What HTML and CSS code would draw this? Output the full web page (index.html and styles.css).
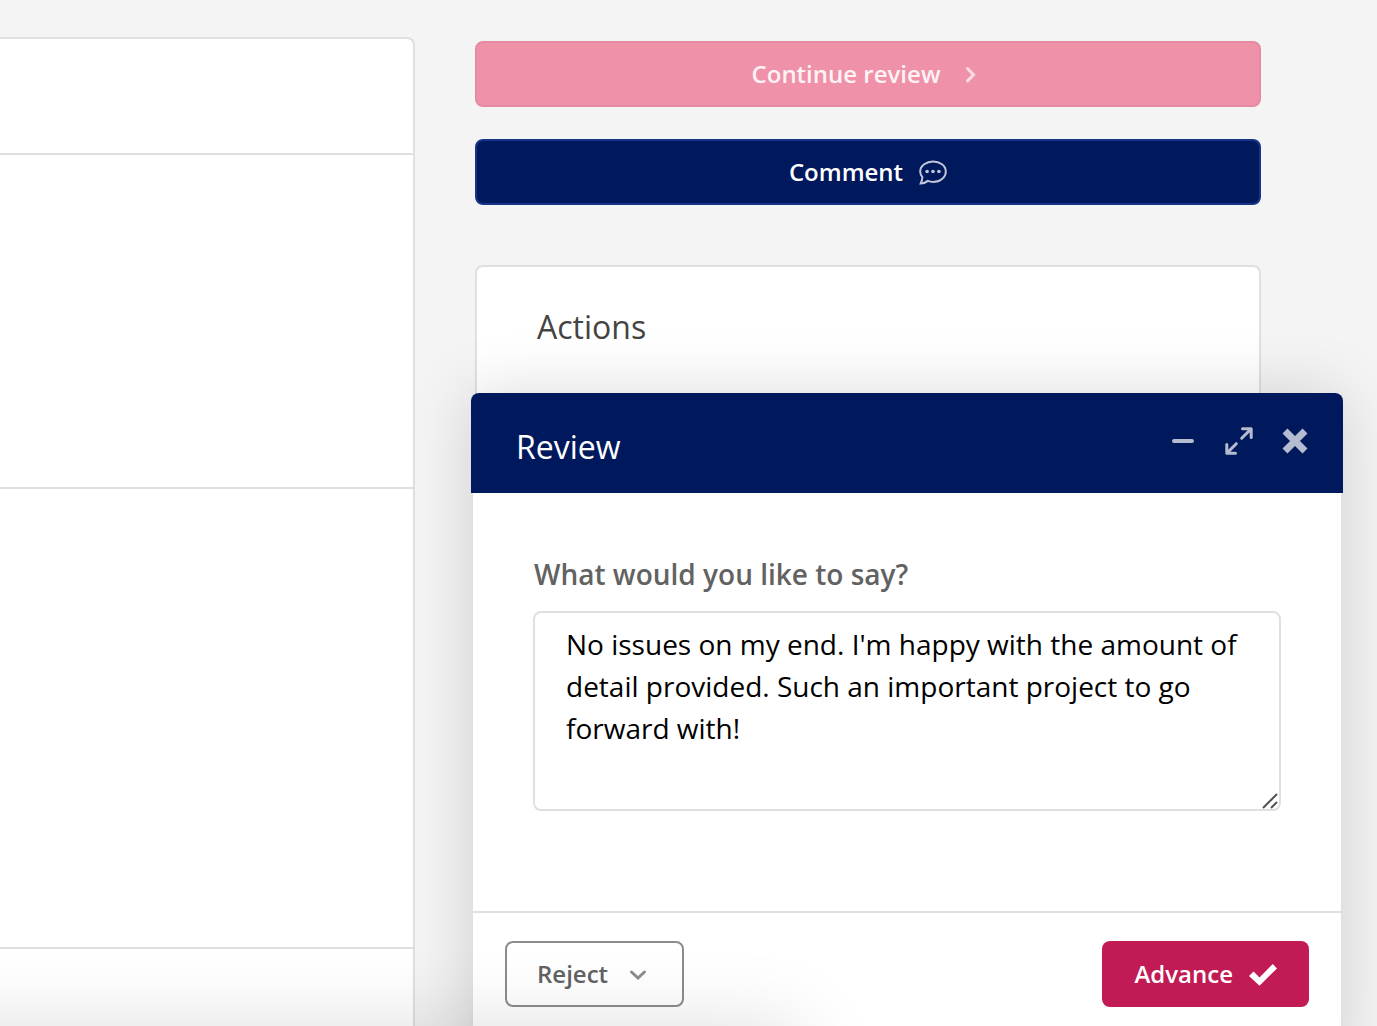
FILE: index.html
```html
<!DOCTYPE html>
<html lang="en">
<head>
<meta charset="utf-8">
<title>Review</title>
<link rel="stylesheet" href="styles.css">
</head>
<body>
<div class="page">
  <main class="record">
    <section class="record-row row-short"></section>
    <section class="record-row row-medium"></section>
    <section class="record-row row-tall"></section>
    <section class="record-row row-last"></section>
  </main>
  <aside class="sidebar">
    <button class="button button-continue" type="button" disabled>
      <span>Continue review</span>
      <svg class="icon-chevron" width="28" height="28" viewBox="0 0 28 28" aria-hidden="true"><path d="M11.500 8.500l6 6.200-6 6.200"/></svg>
    </button>
    <button class="button button-comment" type="button">
      <span>Comment</span>
      <svg class="icon-comment" width="28" height="28" viewBox="0 0 28 28" aria-hidden="true"><path d="M14.200 3.500C20.800 3.500 26.800 7.500 26.800 13.500S21 23.900 14.200 23.900c-2 0-3.800-.300-5.300-1-2.100 1.700-4.600 2.800-7.300 2.700 1.100-2.200 1.700-4.300 1.800-6.400C1.900 17.500 1.200 15.700 1.200 13.500 1.200 7.500 7.500 3.500 14.200 3.500z"/><circle cx="8.100" cy="13.500" r="1.800"/><circle cx="14" cy="13.500" r="1.800"/><circle cx="19.900" cy="13.500" r="1.800"/></svg>
    </button>
    <section class="actions">
      <h2 class="heading">Actions</h2>
    </section>
  </aside>
</div>

<form class="dialog" role="dialog" aria-labelledby="dialog-title">
  <header class="dialog-header">
    <h2 class="heading" id="dialog-title">Review</h2>
    <div class="dialog-tools">
      <button class="tool" type="button" aria-label="Minimise"><svg width="28" height="28" viewBox="0 0 28 28"><path class="line-thick" d="M5 14h18"/></svg></button>
      <button class="tool" type="button" aria-label="Expand"><svg width="28" height="28" viewBox="0 0 28 28"><path class="line-thin" d="M16.700 11.300L25 3M17.500 1.800h8.700v8.700M11.300 16.700L3 25M1.800 17.500v8.700h8.700"/></svg></button>
      <button class="tool" type="button" aria-label="Close"><svg width="28" height="28" viewBox="0 0 28 28"><path class="cross" d="M4 4l20 20M24 4L4 24"/></svg></button>
    </div>
  </header>
  <div class="dialog-body">
    <label class="label" for="message">What would you like to say?</label>
    <div class="field">
      <textarea class="textarea" id="message">No issues on my end. I'm happy with the amount of detail provided. Such an important project to go forward with!</textarea>
      <svg class="grip" width="16" height="16" viewBox="0 0 16 16" aria-hidden="true"><path d="M1 15L15 1M9 15l6-6"/></svg>
    </div>
  </div>
  <footer class="dialog-footer">
    <button class="button button-reject" type="button">
      <span>Reject</span>
      <svg class="icon-chevron" width="28" height="28" viewBox="0 0 28 28" aria-hidden="true"><path d="M7.500 12l6.500 6 6.500-6"/></svg>
    </button>
    <button class="button button-advance" type="submit">
      <span>Advance</span>
      <svg class="icon-check" width="28" height="28" viewBox="0 0 28 28" aria-hidden="true"><path d="M0 16l4.600-4.600 5.900 6L23.800 4l4.200 4.400L10.500 25.800z"/></svg>
    </button>
  </footer>
</form>
<div class="dock"></div>
</body>
</html>
```
FILE: styles.css
```css
* { box-sizing: border-box; }

body {
  margin: 0;
  background: #f4f4f4;
  font-family: "Open Sans", "Noto Sans", sans-serif;
  color: #444;
  height: 100vh;
  overflow: hidden;
}

.page {
  display: grid;
  grid-template-columns: 415fr 786fr;
  gap: 60px;
  padding-right: 116px;
  min-height: 100vh;
}

.record {
  display: flex;
  flex-direction: column;
  margin-top: 37px;
  background: #fff;
  border: 2px solid #e0e0e0;
  border-width: 2px 2px 0 0;
  border-top-right-radius: 8px;
}

.record-row { border-bottom: 2px solid #e0e0e0; }
.row-short { height: 116px; }
.row-medium { height: 334px; }
.row-tall { height: 460px; }
.row-last { flex: 1; border-bottom: 0; }

.sidebar {
  display: flex;
  flex-direction: column;
  padding-top: 41px;
}

.button {
  display: flex;
  align-items: center;
  justify-content: center;
  gap: 16px;
  height: 66px;
  padding: 0 30px;
  border: 2px solid transparent;
  border-radius: 8px;
  font: 600 24px/32px "Open Sans", "Noto Sans", sans-serif;
  color: #fff;
}

.button svg, .tool svg { display: block; fill: none; stroke: currentColor; }
.icon-chevron path { stroke-width: 3; stroke-linecap: round; }

.button-continue {
  background: #ef91a9;
  border-color: #e48ba2;
  color: #fdf3f5;
}
.button-continue .icon-chevron { color: #fadde4; }

.button-comment {
  margin-top: 32px;
  background: #00185c;
  border-color: #173385;
}
.icon-comment { color: #c0c6d8; }
.icon-comment path { stroke-width: 2; }
.icon-comment circle { fill: currentColor; stroke: none; }

.actions {
  margin-top: 60px;
  flex: 1;
  padding: 38px 60px;
  background: #fff;
  border: 2px solid #e0e0e0;
  border-bottom: 0;
  border-radius: 8px 8px 0 0;
}

.heading {
  margin: 0;
  font-size: 32px;
  line-height: 44px;
  font-weight: 400;
}

.dialog {
  position: absolute;
  top: 393px;
  right: 34px;
  width: 872px;
  bottom: -40px;
  display: flex;
  flex-direction: column;
  border-radius: 8px;
  box-shadow: 0 0 64px rgba(0, 0, 0, .15);
}

.dialog-header {
  display: flex;
  justify-content: space-between;
  height: 100px;
  padding: 32px 34px 0 45px;
  background: #00185c;
  color: #fff;
  border-radius: 8px 8px 0 0;
}

.dialog-tools { display: flex; gap: 28px; align-items: flex-start; }

.tool {
  padding: 2px 0;
  border: 0;
  background: none;
  color: #b5bbd0;
}
.line-thick { stroke-width: 4; stroke-linecap: round; }
.line-thin { stroke-width: 3; stroke-linecap: round; stroke-linejoin: round; }
.cross { stroke-width: 7; }

.dialog-body {
  height: 418px;
  padding: 61px 60px 0;
  margin: 0;
  background: #fff;
  border: 2px solid #e0e0e0;
  border-width: 0 2px;
}

.label {
  display: block;
  margin-bottom: 17px;
  padding-left: 1px;
  font-size: 28px;
  line-height: 40px;
  font-weight: 600;
  color: #626262;
}

.field { position: relative; }

.textarea {
  display: block;
  width: 100%;
  height: 200px;
  padding: 10px 31px;
  border: 2px solid #e0e0e0;
  border-radius: 8px;
  background: #fff;
  font: 400 28px/42px "Open Sans", "Noto Sans", sans-serif;
  color: #000;
  resize: none;
  overflow: hidden;
}

.grip {
  position: absolute;
  right: 3px;
  bottom: 2px;
  fill: none;
  stroke: #555;
  stroke-width: 2;
}

.dialog-footer {
  display: flex;
  flex: 1;
  justify-content: space-between;
  align-items: flex-start;
  padding: 28px 30px;
  background: #fff;
  border: 2px solid #e0e0e0;
  border-bottom: 0;
}

.dialog-footer { padding: 28px 32px; }

.button-reject {
  background: #fff;
  border-color: #8c8c8c;
  color: #626262;
}
.button-reject .icon-chevron { color: #8c8c8c; }

.button-advance { background: #c21a54; }
.icon-check path { fill: currentColor; stroke: none; }

/* Dock below the fold; only its shadow reaches the window. */
.dock {
  position: fixed;
  left: -100px;
  top: 100%;
  width: 900px;
  height: 200px;
  border-radius: 8px;
  box-shadow: 0 0 80px rgba(0, 0, 0, .13);
  pointer-events: none;
}
```
